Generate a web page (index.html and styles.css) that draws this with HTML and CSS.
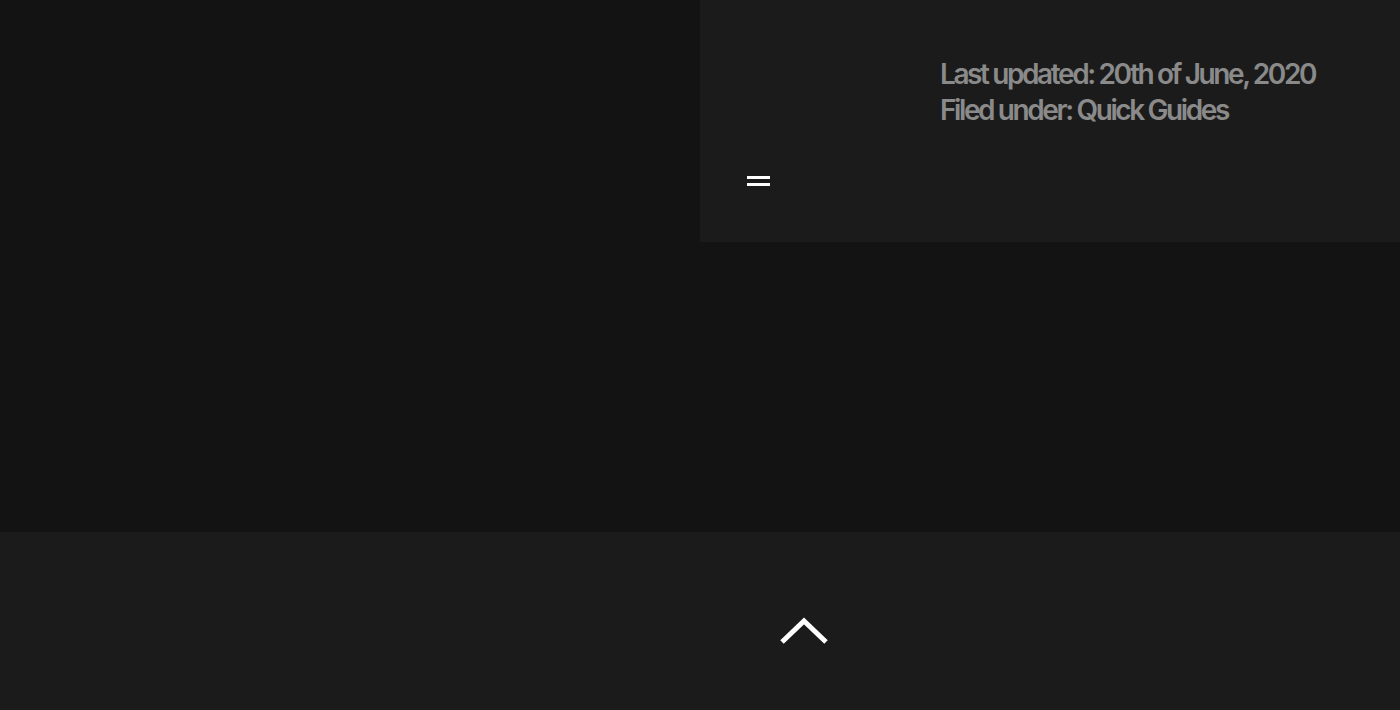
FILE: index.html
```html
<!DOCTYPE html>
<html>
<head>
<meta charset="utf-8">
<link rel="stylesheet" href="styles.css">
</head>
<body>
<div class="page">
  <main class="main">
    <div class="spacer"></div>
    <aside class="panel">
      <div class="meta">
        <p class="line">Last updated: 20th of June, 2020</p>
        <p class="line">Filed under: Quick Guides</p>
      </div>
      <button class="menu" aria-label="Menu">
        <span class="bar"></span>
        <span class="bar"></span>
      </button>
    </aside>
  </main>
  <footer class="footer">
    <a class="top" href="#" aria-label="Back to top">
      <svg width="50" height="32" viewBox="0 0 50 32">
        <polyline points="3,28 25,7 47,28" fill="none" stroke="#ffffff" stroke-width="5" stroke-linecap="butt" stroke-linejoin="miter"/>
      </svg>
    </a>
  </footer>
</div>
</body>
</html>
```
FILE: styles.css
```css
html, body {
  margin: 0;
  padding: 0;
  background: #131313;
  font-family: Inter, "Noto Sans", sans-serif;
}
.page {
  width: 1400px;
  height: 710px;
  display: flex;
  flex-direction: column;
  overflow: hidden;
}
.main {
  height: 532px;
  display: flex;
  align-items: flex-start;
  background: #131313;
}
.spacer {
  width: 700px;
}
.panel {
  width: 700px;
  height: 242px;
  box-sizing: border-box;
  background: #1b1b1b;
  padding: 56px 0 0 47px;
  display: flex;
  flex-direction: column;
}
.meta {
  margin-left: 193px;
}
.line {
  margin: 0;
  font-size: 28px;
  line-height: 36px;
  font-weight: 600;
  letter-spacing: -2.4px;
  color: #8a8a8a;
}
.menu {
  margin-top: 48px;
  width: 23px;
  padding: 0;
  border: 0;
  background: none;
  display: flex;
  flex-direction: column;
  gap: 4.5px;
}
.bar {
  display: block;
  width: 23px;
  height: 2.5px;
  background: #ffffff;
}
.footer {
  flex: 1;
  background: #1b1b1b;
  display: flex;
  justify-content: center;
  padding-left: 208px;
  padding-top: 82px;
  box-sizing: border-box;
}
.top {
  display: block;
  width: 50px;
  height: 32px;
}
.top svg {
  display: block;
}
```
